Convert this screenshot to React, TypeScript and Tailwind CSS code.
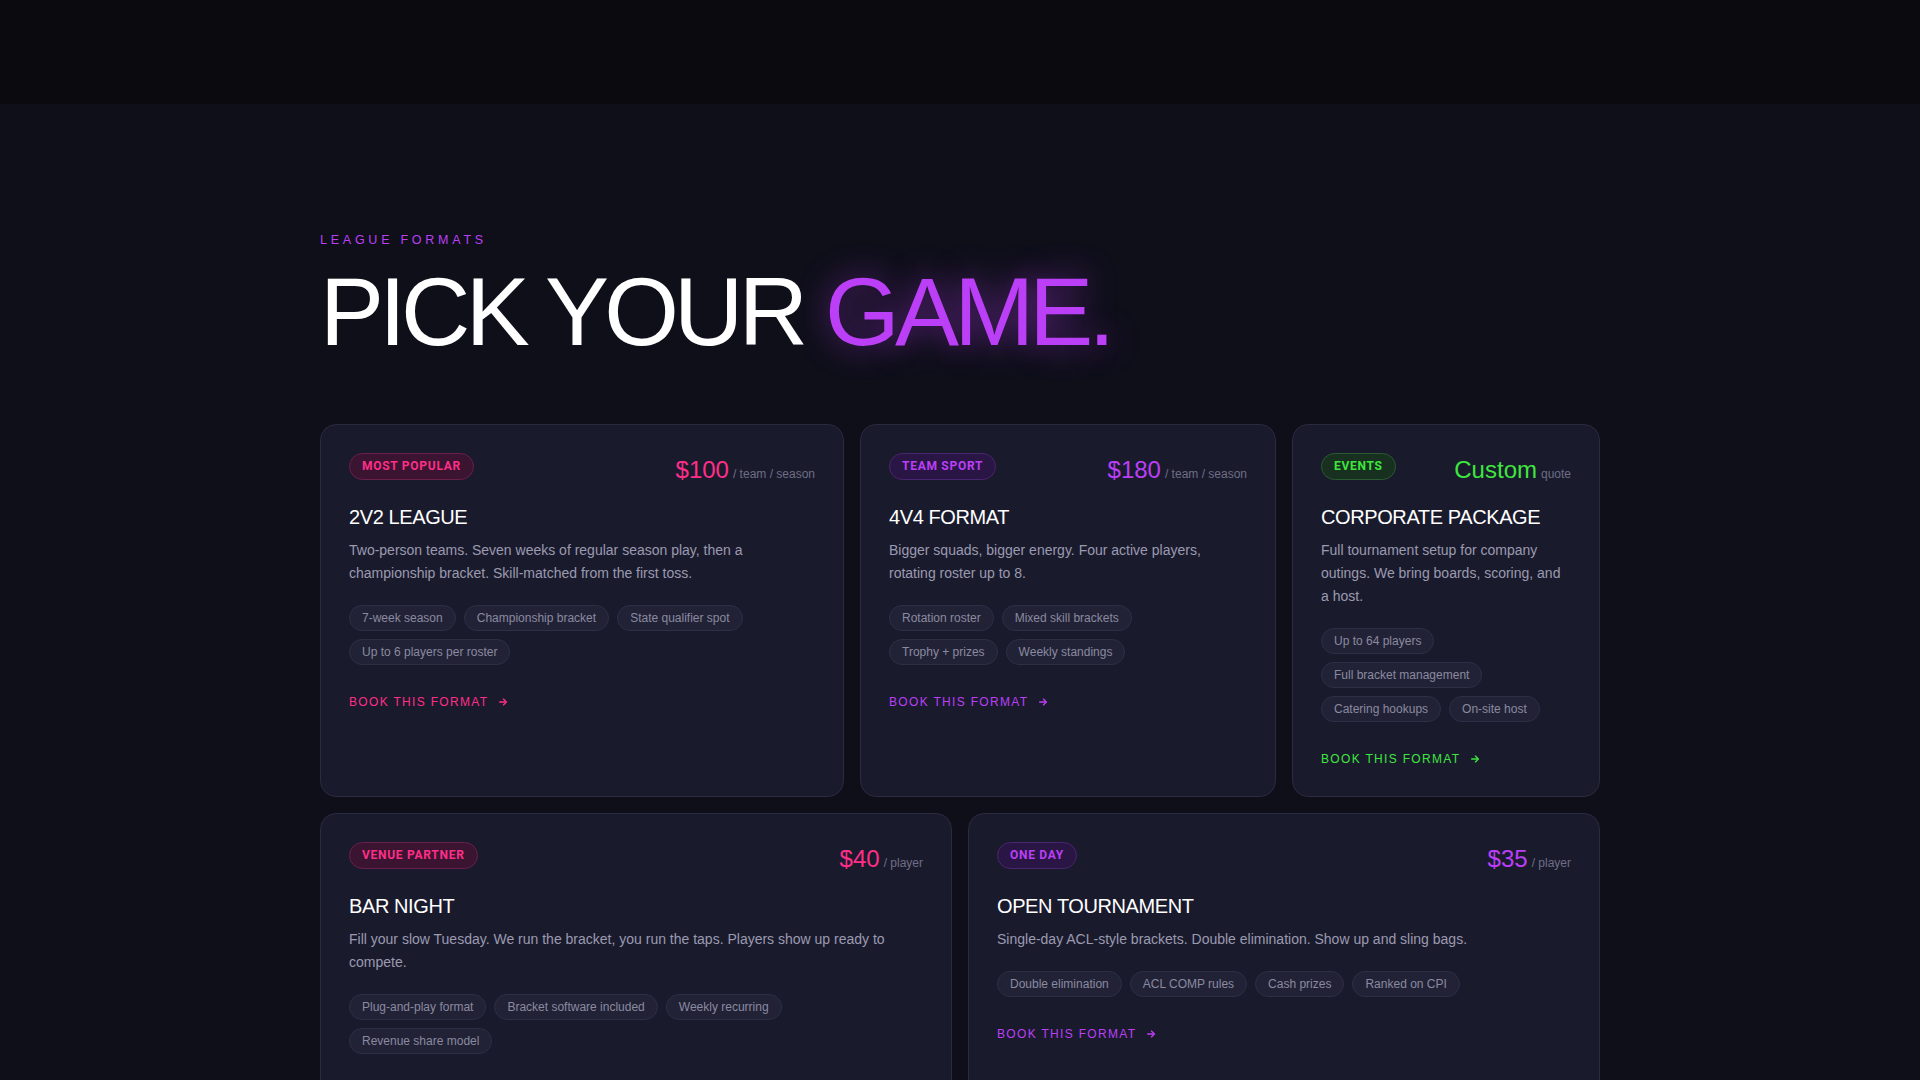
import React from "react";

type Accent = "pink" | "purple" | "green";

const accentText: Record<Accent, string> = {
  pink: "text-[#ff2e88]",
  purple: "text-[#bb3ff6]",
  green: "text-[#3ee63e]",
};

const accentBadge: Record<Accent, string> = {
  pink: "text-[#ff2e88] bg-[#3a1430] border-[#6a1f4c]",
  purple: "text-[#bb3ff6] bg-[#2a1645] border-[#4a2570]",
  green: "text-[#3ee63e] bg-[#183020] border-[#2a5a30]",
};

type Card = {
  badge: string;
  accent: Accent;
  price: string;
  unit: string;
  title: string;
  desc: string;
  tags: string[];
  span: string;
};

const cards: Card[] = [
  {
    badge: "MOST POPULAR",
    accent: "pink",
    price: "$100",
    unit: "/ team / season",
    title: "2V2 LEAGUE",
    desc: "Two-person teams. Seven weeks of regular season play, then a championship bracket. Skill-matched from the first toss.",
    tags: ["7-week season", "Championship bracket", "State qualifier spot", "Up to 6 players per roster"],
    span: "col-span-5",
  },
  {
    badge: "TEAM SPORT",
    accent: "purple",
    price: "$180",
    unit: "/ team / season",
    title: "4V4 FORMAT",
    desc: "Bigger squads, bigger energy. Four active players, rotating roster up to 8.",
    tags: ["Rotation roster", "Mixed skill brackets", "Trophy + prizes", "Weekly standings"],
    span: "col-span-4",
  },
  {
    badge: "EVENTS",
    accent: "green",
    price: "Custom",
    unit: "quote",
    title: "CORPORATE PACKAGE",
    desc: "Full tournament setup for company outings. We bring boards, scoring, and a host.",
    tags: ["Up to 64 players", "Full bracket management", "Catering hookups", "On-site host"],
    span: "col-span-3",
  },
  {
    badge: "VENUE PARTNER",
    accent: "pink",
    price: "$40",
    unit: "/ player",
    title: "BAR NIGHT",
    desc: "Fill your slow Tuesday. We run the bracket, you run the taps. Players show up ready to compete.",
    tags: ["Plug-and-play format", "Bracket software included", "Weekly recurring", "Revenue share model"],
    span: "col-span-6",
  },
  {
    badge: "ONE DAY",
    accent: "purple",
    price: "$35",
    unit: "/ player",
    title: "OPEN TOURNAMENT",
    desc: "Single-day ACL-style brackets. Double elimination. Show up and sling bags.",
    tags: ["Double elimination", "ACL COMP rules", "Cash prizes", "Ranked on CPI"],
    span: "col-span-6",
  },
];

function Arrow() {
  return (
    <svg width="10" height="10" viewBox="0 0 24 24" fill="none" stroke="currentColor" strokeWidth="3.2" strokeLinecap="round" strokeLinejoin="round">
      <path d="M4 12h15" />
      <path d="M13 5l7 7-7 7" />
    </svg>
  );
}

function FormatCard({ c }: { c: Card }) {
  return (
    <div className={`${c.span} rounded-2xl border border-[#2a2a40] bg-[#1a1a2d] px-7 pt-7 pb-[26px]`}>
      <div className="flex items-start justify-between">
        <span
          className={`inline-flex h-[27px] items-center rounded-full border px-3 text-[12px] font-bold tracking-[0.06em] ${accentBadge[c.accent]}`}
          style={{ fontFamily: "Roboto, 'Liberation Sans', sans-serif" }}
        >
          {c.badge}
        </span>
        <div className="flex items-baseline gap-1 pt-[5px]">
          <span className={`text-[24px] leading-none ${accentText[c.accent]}`}>{c.price}</span>
          <span className="text-[12px] text-[#6e6e85]">{c.unit}</span>
        </div>
      </div>
      <h3 className="mt-[20px] text-[20px] leading-7 tracking-[-0.02em] text-white">{c.title}</h3>
      <p className="mt-2 text-[14px] leading-[23px] text-[#9a9ab0]">{c.desc}</p>
      <div className="mt-5 flex flex-wrap gap-2">
        {c.tags.map((t) => (
          <span
            key={t}
            className="inline-flex h-[26px] items-center rounded-full border border-[#2e2e45] bg-[#222236] px-3 text-[12px] text-[#8a8aa0]"
          >
            {t}
          </span>
        ))}
      </div>
      <a className={`mt-7 inline-flex items-center gap-[10px] text-[12px] font-medium tracking-[0.11em] ${accentText[c.accent]}`}>
        BOOK THIS FORMAT
        <Arrow />
      </a>
    </div>
  );
}

export default function App() {
  return (
    <div className="min-h-screen bg-[#0f0f1a] text-white" style={{ fontFamily: "'Liberation Sans', Arial, sans-serif" }}>
      <div className="h-[104px] bg-[#0a0a0f]" />
      <section className="mx-auto w-[1280px] pt-[127px] pb-16">
        <p className="text-[12.5px] tracking-[0.3em] text-[#bb3ff6]">LEAGUE FORMATS</p>
        <h1 className="mt-[12px] text-[96px] leading-[1.05] tracking-[-0.05em] text-white">
          PICK YOUR{" "}
          <span className="text-[#bb3ff6] [text-shadow:0_0_30px_rgba(187,63,246,0.55)]">GAME.</span>
        </h1>
        <div className="mt-[61px] grid grid-cols-12 gap-4">
          {cards.map((c) => (
            <FormatCard key={c.title} c={c} />
          ))}
        </div>
      </section>
    </div>
  );
}
